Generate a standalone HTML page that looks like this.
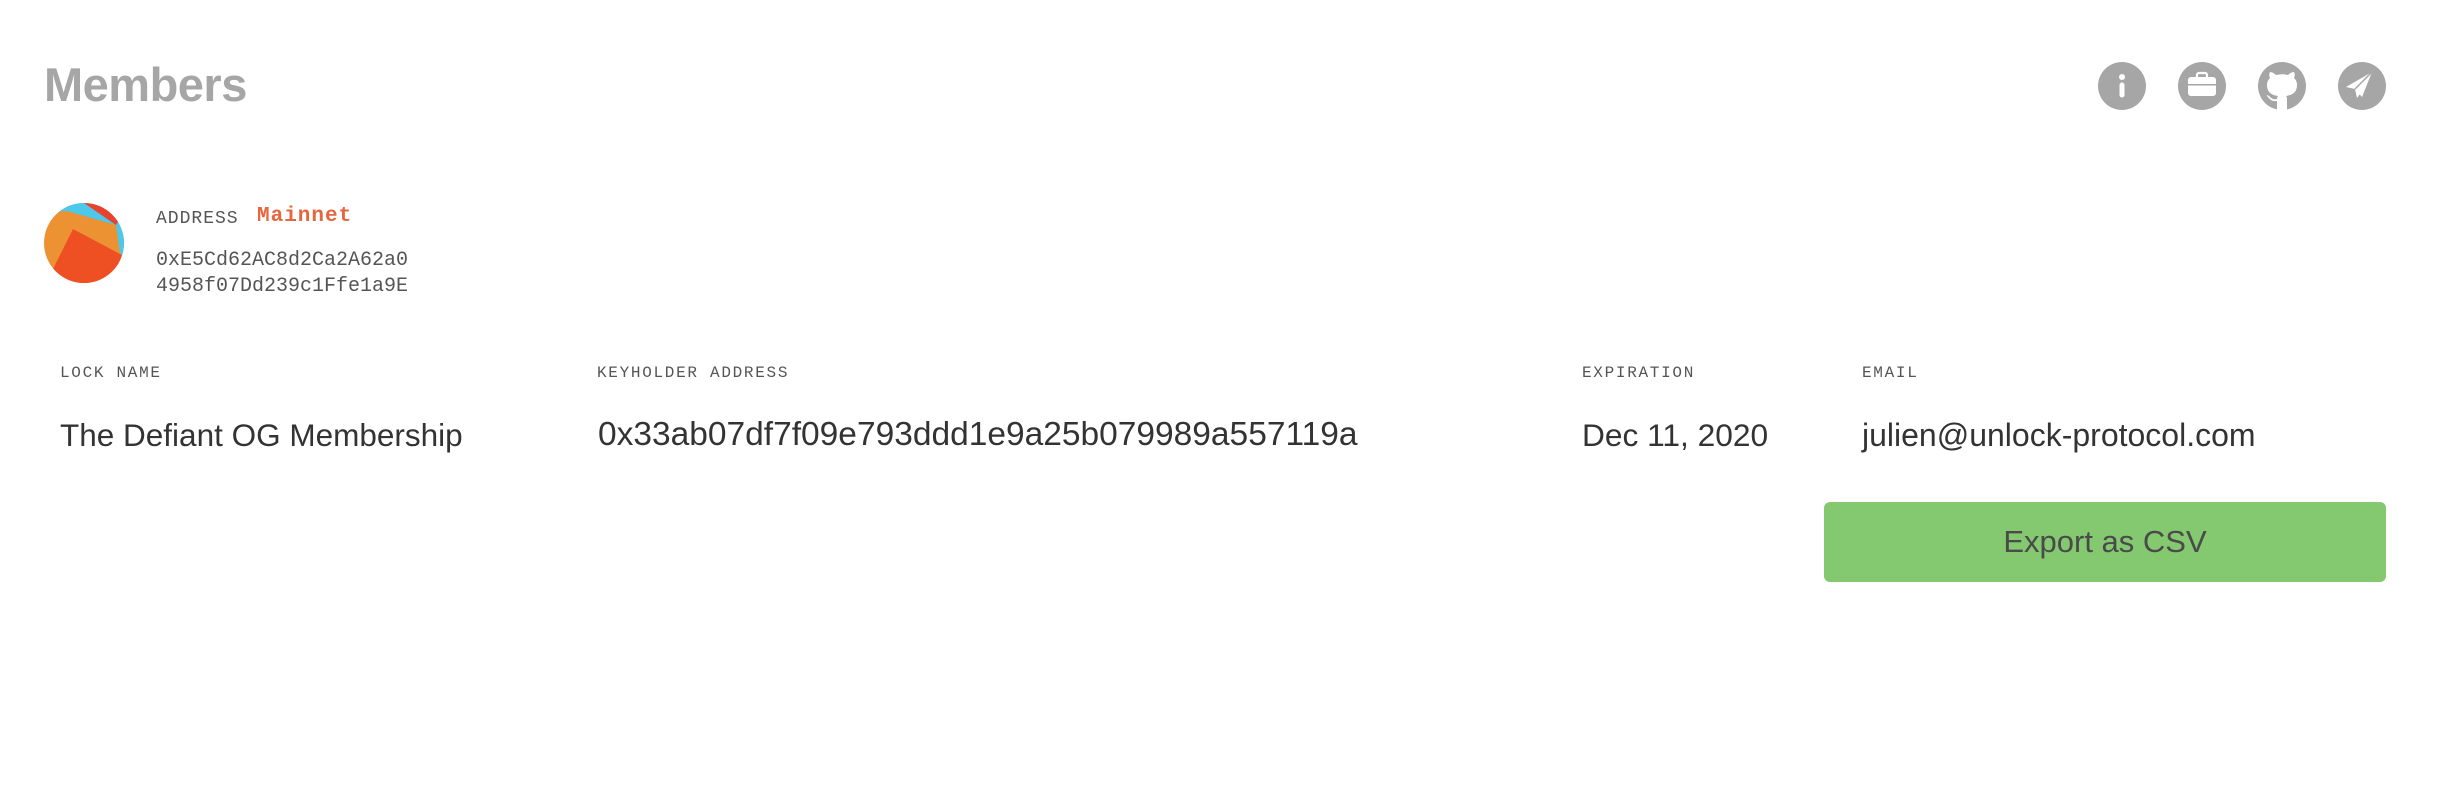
<!DOCTYPE html>
<html><head><meta charset="utf-8"><style>
body{margin:0;width:2462px;height:796px;background:#fff;position:relative;overflow:hidden;font-family:"Liberation Sans",sans-serif;color:#333}
.a{position:absolute;white-space:nowrap}
h1{position:absolute;left:44px;top:57px;margin:0;font-size:47px;font-weight:bold;color:#a6a6a6;letter-spacing:-0.5px}
.mono{font-family:"Liberation Mono",monospace}
.lbl{font-family:"Liberation Mono",monospace;font-size:16px;color:#555;letter-spacing:1.7px}
.val{font-size:31px;color:#333}
.ic{position:absolute;top:62px;width:48px;height:48px}
</style></head><body>
<h1>Members</h1>
<svg class="ic" style="left:2098px" viewBox="0 0 48 48"><circle cx="24" cy="24" r="24" fill="#a6a6a6"/><circle cx="24" cy="15" r="3" fill="#fff"/><rect x="21.5" y="20.5" width="5" height="15" rx="2.5" fill="#fff"/></svg>
<svg class="ic" style="left:2178px" viewBox="0 0 48 48"><circle cx="24" cy="24" r="24" fill="#a6a6a6"/><rect x="19" y="11" width="10" height="6" rx="2" fill="none" stroke="#fff" stroke-width="2.2"/><rect x="10" y="15" width="28" height="19" rx="3" fill="#fff"/><rect x="10" y="22" width="28" height="1.5" fill="#a6a6a6"/></svg>
<svg class="ic" style="left:2258px" viewBox="0 0 48 48"><circle cx="24" cy="24" r="24" fill="#a6a6a6"/><path fill="#fff" d="M19 48 V39 C13 40 11 36 9 34 C8 33 10 33 11 34 C13 36 15 38 19 37 C19 35 20 34 20 34 C13 33 9 30 9 23 C9 20 10 18 12 16 C11 14 11 12 12 10 C14 10 16 11 18 13 C22 12 26 12 30 13 C32 11 34 10 36 10 C37 12 37 14 36 16 C38 18 39 20 39 23 C39 30 35 33 28 34 C29 35 29 36 29 38 V48 Z"/></svg>
<svg class="ic" style="left:2338px" viewBox="0 0 48 48"><circle cx="24" cy="24" r="24" fill="#a6a6a6"/><path fill="#fff" d="M34 10 L8 25 L17 27 L24 35 Z M17 27 L19 36 L22 32 Z"/><path d="M17 27 L34 10" stroke="#a6a6a6" stroke-width="1.5"/></svg>
<svg class="a" style="left:44px;top:203px" width="80" height="80" viewBox="0 0 80 80"><defs><clipPath id="c"><circle cx="40" cy="40" r="40"/></clipPath></defs><g clip-path="url(#c)"><rect width="80" height="80" fill="#ed9232"/><polygon points="0,0 80,0 80,56 76,50 72,22 23,8 0,10" fill="#4cc8ea"/><polygon points="40,0 80,0 80,8 72,22" fill="#e8412c"/><polygon points="29,26 78,52 70,80 0,80 9,66" fill="#ee5024"/></g></svg>
<div class="a mono" style="left:156px;top:209px;font-size:18px;color:#555;letter-spacing:1px">ADDRESS</div>
<div class="a mono" style="left:257px;top:205px;font-size:21px;font-weight:bold;color:#e8663d;letter-spacing:1px">Mainnet</div>
<div class="a mono" style="left:156px;top:248px;font-size:20px;color:#555;line-height:26px">0xE5Cd62AC8d2Ca2A62a0<br>4958f07Dd239c1Ffe1a9E</div>
<div class="a lbl" style="left:60px;top:364px">LOCK NAME</div>
<div class="a lbl" style="left:597px;top:364px">KEYHOLDER ADDRESS</div>
<div class="a lbl" style="left:1582px;top:364px">EXPIRATION</div>
<div class="a lbl" style="left:1862px;top:364px">EMAIL</div>
<div class="a val" style="left:60px;top:417px;font-size:31.5px">The Defiant OG Membership</div>
<div class="a val" style="left:598px;top:416px;font-size:33.5px">0x33ab07df7f09e793ddd1e9a25b079989a557119a</div>
<div class="a val" style="left:1582px;top:417px;font-size:31.7px">Dec 11, 2020</div>
<div class="a val" style="left:1862px;top:417px;font-size:32px">julien@unlock-protocol.com</div>
<div class="a" style="left:1824px;top:502px;width:562px;height:80px;background:#84c870;border-radius:6px;color:#4a4a4a;font-size:31px;text-align:center;line-height:80px">Export as CSV</div>
</body></html>
